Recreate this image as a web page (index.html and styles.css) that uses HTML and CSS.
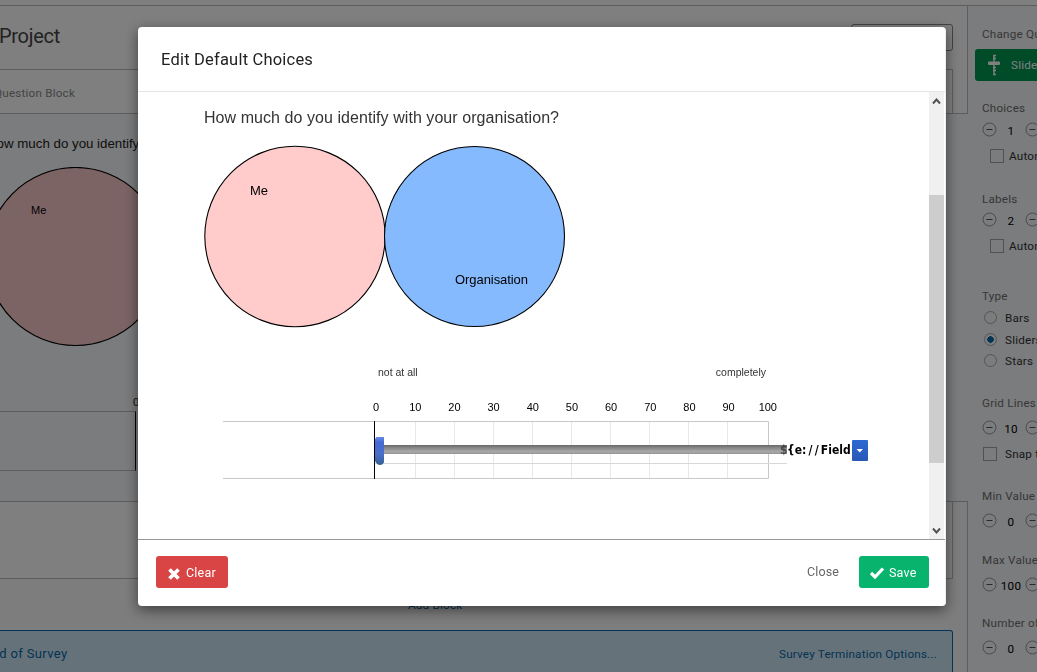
FILE: index.html
```html
<!DOCTYPE html>
<html lang="en">
<head>
<meta charset="utf-8">
<title>Edit Default Choices</title>
<link rel="stylesheet" href="styles.css">
</head>
<body>
<svg class="defs" width="0" height="0">
  <symbol id="minus" viewBox="0 0 15 15"><circle cx="7.5" cy="7.500" r="6.500" fill="none" stroke="#999" stroke-width="1"/><path d="M4.500 7.500h6" stroke="#555" stroke-width="1"/></symbol>
</svg>
<div class="page">
  <div class="topbar"></div>
  <div class="columns">
    <main class="main">
      <div class="upper">
        <header class="project"><h1>Project</h1><div class="search"></div></header>
        <div class="block-title"><span>Question Block</span></div>
      </div>
      <section class="question">
        <p class="question-text">How much do you identify</p>
        <svg class="bg-circle" width="180" height="181" viewBox="0 0 180 181"><circle cx="89.500" cy="89.500" r="89" fill="#f9c8cb" stroke="#000" stroke-width="1.200"/><text x="45" y="47">Me</text></svg>
        <div class="bg-scale"><span>0</span></div>
        <div class="bg-slider"></div>
      </section>
      <div class="lower">
        <div class="block-end"></div>
        <div class="add-block">Add Block</div>
        <div class="survey-end"><span class="end-name">End of Survey</span><span class="end-options">Survey Termination Options...</span></div>
      </div>
    </main>
    <aside class="sidebar">
      <div class="group change">
        <div class="label">Change Question Type</div>
        <div class="type-button"><svg width="14" height="24" viewBox="0 0 14 24"><path d="M7 2v20M6 2.500h3M6 5.500h3M6 14.500h3M6 17.500h3M6 21.500h3" stroke="#fff" stroke-width="1.400" fill="none"/><rect x="1" y="8.500" width="12" height="3.500" rx="1" fill="#fff"/></svg><span>Slider</span></div>
      </div>
      <div class="group choices">
        <div class="label">Choices</div>
        <div class="stepper"><svg><use href="#minus"/></svg><b>1</b><svg><use href="#minus"/></svg></div>
        <div class="check inset"><i></i>Automatic</div>
      </div>
      <div class="group labels">
        <div class="label">Labels</div>
        <div class="stepper"><svg><use href="#minus"/></svg><b>2</b><svg><use href="#minus"/></svg></div>
        <div class="check inset"><i></i>Automatic</div>
      </div>
      <div class="group types">
        <div class="label">Type</div>
        <div class="radio"><i></i>Bars</div>
        <div class="radio on"><i></i>Sliders</div>
        <div class="radio"><i></i>Stars</div>
      </div>
      <div class="group grid-lines">
        <div class="label">Grid Lines</div>
        <div class="stepper"><svg><use href="#minus"/></svg><b>10</b><svg><use href="#minus"/></svg></div>
        <div class="check"><i></i>Snap to Grid</div>
      </div>
      <div class="group value min">
        <div class="label">Min Value</div>
        <div class="stepper"><svg><use href="#minus"/></svg><b>0</b><svg><use href="#minus"/></svg></div>
      </div>
      <div class="group value max">
        <div class="label">Max Value</div>
        <div class="stepper"><svg><use href="#minus"/></svg><b>100</b><svg><use href="#minus"/></svg></div>
      </div>
      <div class="group value">
        <div class="label">Number of Decimals</div>
        <div class="stepper"><svg><use href="#minus"/></svg><b>0</b><svg><use href="#minus"/></svg></div>
      </div>
    </aside>
  </div>
</div>

<div class="overlay">
  <div class="modal">
    <header class="modal-head">Edit Default Choices</header>
    <div class="modal-body">
      <div class="content">
        <p class="prompt">How much do you identify with your organisation?</p>
        <svg class="venn" width="364" height="184" viewBox="0 0 364 184">
          <circle cx="92" cy="91.500" r="90.200" fill="#ffcbcb" stroke="#000" stroke-width="1.100"/>
          <circle cx="271.500" cy="91.500" r="90" fill="#85baff" stroke="#000" stroke-width="1.100"/>
          <text x="47" y="50">Me</text>
          <text x="252" y="139" textLength="73">Organisation</text>
        </svg>
        <div class="ends"><span>not at all</span><span>completely</span></div>
        <div class="ticks"><span>0</span><span>10</span><span>20</span><span>30</span><span>40</span><span>50</span><span>60</span><span>70</span><span>80</span><span>90</span><span>100</span></div>
        <div class="slider-row">
          <svg class="slider" width="566" height="58" viewBox="0 0 566 58">
            <defs>
              <linearGradient id="track" x2="0" y2="1"><stop offset="0" stop-color="#686868"/><stop offset=".3" stop-color="#858585"/><stop offset=".75" stop-color="#aaa"/><stop offset="1" stop-color="#929292"/></linearGradient>
              <linearGradient id="knob" x2="0" y2="1"><stop offset="0" stop-color="#668be2"/><stop offset=".2" stop-color="#4669d3"/><stop offset=".6" stop-color="#4870cc"/><stop offset="1" stop-color="#346092"/></linearGradient>
            </defs>
            <path d="M192.500 1v56M231.500 1v56M270.500 1v56M309.500 1v56M348.500 1v56M387.500 1v56M426.500 1v56M465.500 1v56M504.500 1v56" stroke="#e8e8e8"/>
            <path d="M0 .5h545.500v57H0" fill="none" stroke="#c8c8c8"/>
            <path d="M152 42.500h412" stroke="#d8d8d8"/>
            <path d="M151.500 0v58" stroke="#000"/>
            <rect x="160" y="24" width="404" height="9" fill="url(#track)"/>
            <path d="M153.500 16h7.500v25q-1 3-4 3t-5-4V18z" fill="url(#knob)"/>
          </svg>
          <div class="field"><span>$</span>{e<em>://</em>Field</div>
          <div class="drop"><svg width="16" height="21" viewBox="0 0 16 21"><path d="M4.500 9h6.500l-3.250 3.500z" fill="#fff"/></svg></div>
        </div>
      </div>
      <div class="scrollbar">
        <svg width="15" height="17" viewBox="0 0 15 17"><path d="M4 11.500l3.500-4 3.500 4" fill="none" stroke="#505050" stroke-width="1.900"/></svg>
        <div class="thumb"></div>
        <svg width="15" height="17" viewBox="0 0 15 17"><path d="M4 6.500l3.500 4 3.500-4" fill="none" stroke="#505050" stroke-width="1.900"/></svg>
      </div>
    </div>
    <footer class="modal-foot">
      <div class="button clear"><svg width="14" height="14" viewBox="0 0 14 14"><path d="M2.500 2.500l9 9M11.500 2.500l-9 9" stroke="#fff" stroke-width="3.700"/></svg><span>Clear</span></div>
      <div class="close">Close</div>
      <div class="button save"><svg width="16" height="14" viewBox="0 0 16 14"><path d="M2 7l4 4 8-8.500" fill="none" stroke="#fff" stroke-width="3.200"/></svg><span>Save</span></div>
    </footer>
  </div>
</div>
</body>
</html>
```
FILE: styles.css
```css
* { box-sizing: border-box; }
body { margin: 0; width: 1037px; height: 672px; overflow: hidden; background: #f6f8fa; font: 11.700px/20px Roboto, "Open Sans", sans-serif; letter-spacing: .2px; color: #222; }
.defs { position: absolute; }
p, h1 { margin: 0; }
svg { display: block; flex: none; }

.page { height: 672px; overflow: hidden; white-space: nowrap; }
.topbar { height: 6px; background: #fff; border-bottom: 1px solid #bbb; }
.columns { display: grid; grid-template-columns: 968px 69px; height: 666px; }
.main { overflow: hidden; }
.upper { height: 108px; background: #fff; border-right: 1px solid #bbb; border-bottom: 1px solid #bbb; }
.project { height: 63px; padding: 18px 14px 0 0; display: flex; justify-content: space-between; }
.project h1 { font: 20px/24px Roboto, sans-serif; color: #444; letter-spacing: -.3px; margin-left: -1px; }
.search { width: 102px; height: 27px; border: 1px solid #888; border-radius: 3px; }
.block-title { width: 953px; height: 45px; border: solid #bbb; border-width: 1px 1px 0 0; line-height: 46px; color: #888; }
.block-title span { margin-left: -6px; }
.question { height: 387px; padding-top: 21px; letter-spacing: 0; }
.question-text { margin-left: -13px; font: 13.300px/18px "Liberation Sans", sans-serif; }
.bg-circle { margin: 14px 0 0 -14px; font: 11px "Liberation Sans", sans-serif; }
.bg-scale { margin: 44px 0 0 133px; height: 19px; font: 11px/20px "Liberation Sans", sans-serif; }
.bg-slider { height: 60px; width: 136px; border: solid #bbb; border-width: 1px 0; border-right: 1px solid #000; }
.lower { height: 171px; background: #fafafa; border: solid #bbb; border-width: 1px 1px 0 0; }
.block-end { width: 953px; height: 77px; background: #fff; border: 1px solid #bbb; border-width: 0 1px 1px 0; }
.add-block { margin: 16px 0 0 408px; height: 20px; color: #006099; }
.survey-end { margin-top: 15px; width: 953px; height: 60px; background: #cde5f3; border: 1px solid #0768b0; border-left: 0; border-radius: 0 3px 0 0; display: flex; justify-content: space-between; padding-right: 15px; line-height: 46px; color: #0768a8; }
.end-name { margin-left: -16px; font-size: 13px; letter-spacing: .35px; }

.sidebar { padding: 18px 0 0 14px; overflow: hidden; color: #333; }
.group { display: grid; }
.label { color: #6f6f6f; height: 20px; line-height: 21px; }
.change { height: 74px; align-content: start; gap: 5px; }
.type-button { margin-left: -7px; height: 32px; background: #009651; border-radius: 3px; color: #fff; display: flex; align-items: center; gap: 10px; padding-left: 12px; }
.choices, .labels { grid-template-rows: 22px 26px 20px; }
.choices { height: 91px; align-content: start; }
.labels { grid-template-rows: 21px 26px 20px; height: 97px; align-content: start; }
.types { grid-template-rows: 22px 22px 21px 20px; height: 107px; align-content: start; }
.grid-lines { grid-template-rows: 25px 26px 20px; height: 93px; align-content: start; }
.value { grid-template-rows: 25px 20px; height: 63px; align-content: start; }
.min { height: 64px; }
.stepper { display: flex; align-items: center; height: 19px; }
.stepper svg { width: 15px; height: 15px; }
.stepper b { width: 28px; text-align: center; font-weight: 400; color: #000; margin-top: 2px; }
.check, .radio { display: flex; align-items: center; height: 20px; }
.radio { height: 19px; }
.check i { width: 14px; height: 14px; border: 1px solid #a3a3a3; margin: 0 8px 0 1px; }
.inset i { margin: 0 5px 0 8px; }
.radio i { width: 13px; height: 13px; border: 1px solid #aaa; border-radius: 50%; margin: 0 8px 0 2px; }
.on i { background: radial-gradient(#0768a8 3px, transparent 3.500px); }

.overlay { position: fixed; inset: 0; background: rgba(0,0,0,.5); padding: 27px 0 0 138px; }
.modal { width: 808px; height: 579px; background: #fff; border-radius: 4px; border-right: 1px solid #eee; box-shadow: 0 4px 14px rgba(0,0,0,.5); overflow: hidden; }
.modal-head { height: 65px; padding-left: 23px; border-bottom: 1px solid #e4e4e4; font: 16.500px/66px Roboto, sans-serif; color: #222; }
.modal-body { height: 447px; display: flex; letter-spacing: 0; }
.content { width: 791px; padding: 15px 0 0 66px; font-family: "Liberation Sans", sans-serif; }
.prompt { font-size: 16px; line-height: 22px; letter-spacing: .06px; color: #333; }
.venn { margin: 16px 0 0 -1px; font-size: 13px; overflow: visible; }
.ends { margin: 33px 0 0 174px; width: 388px; display: flex; justify-content: space-between; font-size: 10.500px; line-height: 20px; color: #333; }
.ticks { margin: 15px 0 0 152.500px; display: grid; grid-template-columns: repeat(11, 39.180px); text-align: center; font-size: 11px; line-height: 20px; color: #000; }
.slider-row { display: flex; margin: 4px 0 0 19px; }
.field { position: relative; margin: 19px 0 0 -9px; width: 72px; font: bold 12px/20px "DejaVu Sans Condensed", "DejaVu Sans", sans-serif; font-stretch: condensed; color: #000; display: flex; }
.field span { width: 7px; overflow: hidden; opacity: .5; }
.field em { font-style: normal; letter-spacing: 2.200px; }
.drop { margin-top: 19px; width: 16px; height: 21px; background: linear-gradient(#2d69d2, #2858b5); border-radius: 1px; }
.scrollbar { width: 15px; background: #f0f0f0; display: flex; flex-direction: column; justify-content: space-between; }
.thumb { height: 268px; background: #cdcdcd; margin-top: 26px; }
.modal-foot { border-top: 1px solid #999; height: 67px; padding: 16px 16px 0 18px; display: flex; align-items: flex-start; font-size: 12.500px; line-height: 32px; }
.button { height: 32px; border-radius: 3px; color: #fff; display: flex; align-items: center; gap: 5px; padding-left: 11px; }
.button span { margin-top: 2px; }
.clear { width: 72px; background: #d84544; }
.clear svg { margin-top: 3px; }
.close { margin: 0 20px 0 auto; color: #666; letter-spacing: .1px; }
.save { width: 70px; background: #08b36d; padding-left: 10px; gap: 4px; }
.save svg { margin-top: 2px; }
```
